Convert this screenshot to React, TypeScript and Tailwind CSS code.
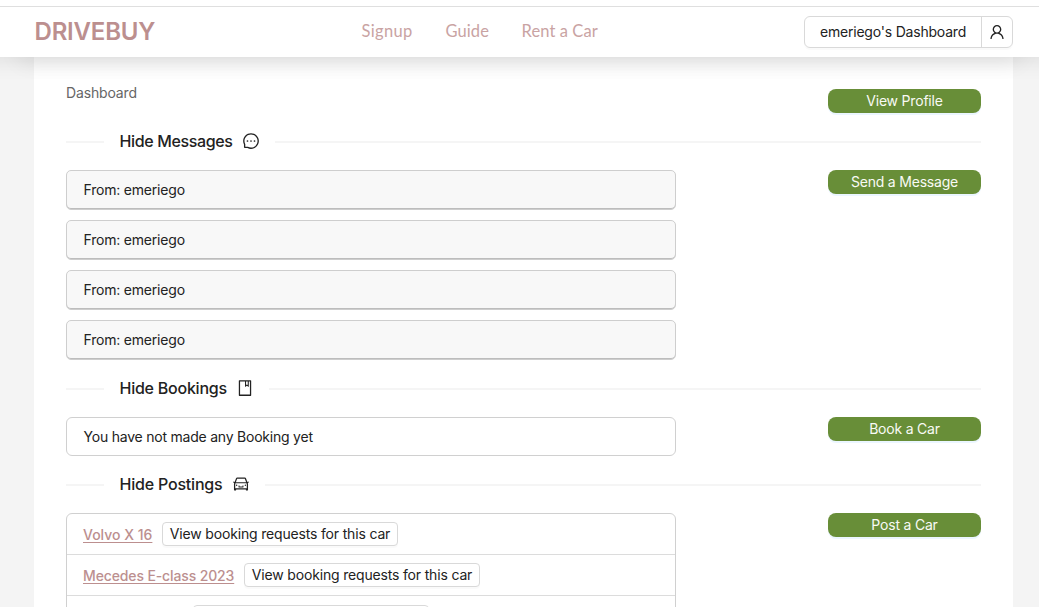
import type { ReactNode } from "react";
import {
  AiOutlineBook,
  AiOutlineCar,
  AiOutlineMessage,
  AiOutlineUser,
} from "react-icons/ai";

function SectionTitle({ children, icon, width }: { children: ReactNode; icon: ReactNode; width: string }) {
  return (
    <div className="flex h-6 items-center">
      <div className="mt-0.5 h-[1.5px] w-[38px] bg-[#f5f5f5]" />
      <h2 className={`ml-[15.5px] whitespace-nowrap text-[16px] leading-6 font-medium text-[#222] ${width}`}>
        {children}
      </h2>
      <span className="ml-[9px] mr-[15px] text-[#222]">{icon}</span>
      <div className="mt-0.5 h-[1.5px] flex-1 bg-[#f5f5f5]" />
    </div>
  );
}

function GreenButton({ children }: { children: ReactNode }) {
  return (
    <button className="flex h-6 w-[153px] shrink-0 items-center justify-center rounded-lg bg-[#688e38] pb-px text-[14px] tracking-[-0.2px] text-[#f8faf5] shadow-[0_2px_0_rgba(5,145,255,0.08)]">
      {children}
    </button>
  );
}

function Posting({ name, spacing }: { name?: string; spacing: string }) {
  return (
    <li className="flex h-[41px] shrink-0 items-center border-b border-[#dcdcdc] px-4 last:border-b-0">
      <a className={`mt-0.5 whitespace-nowrap text-[14px] leading-[22px] font-medium text-[#bc8f8f] underline decoration-1 underline-offset-2 ${spacing}`} href="#">
        {name}
      </a>
      <button className="ml-2.5 flex h-6 w-[236px] shrink-0 items-center justify-center whitespace-nowrap rounded border border-[#d9d9d9] bg-white pb-0.5 text-[14px] tracking-[-0.17px] text-[#222] shadow-[0_2px_0_rgba(0,0,0,0.02)]">
        {name && "View booking requests for this car"}
      </button>
    </li>
  );
}

export default function App() {
  return (
    <div className="flex h-[607px] w-[1039px] flex-col overflow-hidden bg-[#f4f4f4] font-['Inter',sans-serif] text-[#222]">
      <header className="relative z-10 flex h-[57px] shrink-0 flex-col bg-white pt-1.5 shadow-[-20px_4px_22px_rgba(0,0,0,0.09),20px_4px_22px_rgba(0,0,0,0.09)]">
        <div className="grid h-[51px] grid-cols-[327px_1fr_auto] items-center border-t border-[#dfdfdf] pl-[34.5px] pr-[26px]">
          <div className="text-[24px] leading-8 font-semibold tracking-[-0.2px] text-[#bc8f8f]">DRIVEBUY</div>
          <nav className="flex gap-8 whitespace-nowrap pb-px font-['Lato',sans-serif] text-[16.5px] font-normal text-[#c9a3a3]">
            <a className="w-[52px] tracking-[0.35px]" href="#">Signup</a>
            <a className="w-[44px] tracking-[0.1px]" href="#">Guide</a>
            <a className="tracking-[0.1px]" href="#">Rent a Car</a>
          </nav>
          <div className="flex h-8 w-[209px] rounded-md border border-[#d9d9d9] text-[14px] tracking-[-0.2px] shadow-[0_2px_0_rgba(0,0,0,0.02)]">
            <button className="flex flex-1 items-center justify-center whitespace-nowrap border-r border-[#d9d9d9] pb-0.5">
              emeriego's Dashboard
            </button>
            <button className="flex w-[30px] items-center justify-center">
              <AiOutlineUser size={18} />
            </button>
          </div>
        </div>
      </header>

      <main className="ml-[34px] flex w-[979px] flex-1 flex-col overflow-hidden bg-white px-8">
        <div className="flex h-[72px] shrink-0 items-start justify-between">
          <div className="mt-[25px] text-[14px] leading-[22px] tracking-[-0.15px] text-[#666]">Dashboard</div>
          <div className="mt-8"><GreenButton>View Profile</GreenButton></div>
        </div>

        <SectionTitle icon={<AiOutlineMessage size={18} />} width="w-[113px] tracking-[-0.36px]">Hide Messages</SectionTitle>
        <section className="mt-[17px] flex h-[190px] shrink-0 items-start justify-between">
          <ul className="flex w-[610px] flex-col gap-2.5">
            {[1, 2, 3, 4].map((id) => (
              <li key={id} className="flex h-10 items-center rounded-[5px] border border-[#cecece] bg-[#f8f8f8] pr-4 pb-px pl-[16.5px] text-[14px] tracking-[-0.2px] shadow-[inset_0_-1px_0_#bdbdbd]">
                From: emeriego
              </li>
            ))}
          </ul>
          <GreenButton>Send a Message</GreenButton>
        </section>

        <div className="mt-4 shrink-0">
          <SectionTitle icon={<AiOutlineBook size={18} />} width="w-[107px] tracking-[-0.24px]">Hide Bookings</SectionTitle>
        </div>
        <section className="mt-[17px] flex h-[39px] shrink-0 items-start justify-between">
          <div className="flex h-[39px] w-[610px] items-center rounded-md border border-[#d0d0d0] pr-4 pl-[16.5px] text-[14px] tracking-[-0.22px]">
            You have not made any Booking yet
          </div>
          <GreenButton>Book a Car</GreenButton>
        </section>

        <div className="mt-4 shrink-0">
          <SectionTitle icon={<AiOutlineCar size={18} />} width="w-[103px] tracking-[-0.2px]">Hide Postings</SectionTitle>
        </div>
        <section className="mt-[17px] flex shrink-0 items-start justify-between">
          <ul className="flex w-[610px] flex-col rounded-md border border-[#d0d0d0]">
            <Posting name="Volvo X 16" spacing="w-[69px]" />
            <Posting name="Mecedes E-class 2023" spacing="w-[151px] tracking-[-0.13px]" />
            <Posting spacing="w-[100px]" />
          </ul>
          <GreenButton>Post a Car</GreenButton>
        </section>
      </main>
    </div>
  );
}
